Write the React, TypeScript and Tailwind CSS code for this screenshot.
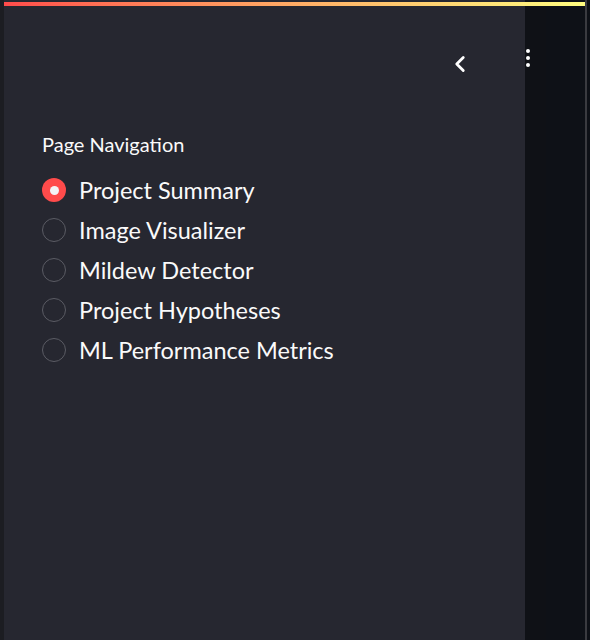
import { ChevronLeft } from "lucide-react";

const pages = [
  "Project Summary",
  "Image Visualizer",
  "Mildew Detector",
  "Project Hypotheses",
  "ML Performance Metrics",
];

export default function App() {
  const selected = 0;

  return (
    <div
      className="relative flex h-[640px] w-[590px] overflow-hidden bg-[#0e1117]"
      style={{ fontFamily: '"Source Sans Pro", Lato, "Noto Sans", sans-serif' }}
    >
      {/* decoration bar, drawn over the page */}
      <div className="absolute left-[4px] top-[2px] z-10 h-[4px] w-[581px] bg-gradient-to-r from-[#ff4b4b] to-[#fffd80]" />

      {/* left window edge */}
      <div className="w-[4px] flex-shrink-0 bg-[#1c1d22]" />

      {/* Sidebar */}
      <aside className="w-[521px] flex-shrink-0 bg-[#262730]">
        <div className="flex justify-end pr-[52px] pt-[51px]">
          <button type="button" className="text-white">
            <ChevronLeft className="h-[26px] w-[26px]" strokeWidth={2.6} />
          </button>
        </div>

        <div className="px-[38px] pt-[57px]">
          <p className="text-[20px] leading-none text-[#fafafa]">Page Navigation</p>
          <div className="mt-[24px] flex flex-col gap-[16px]">
            {pages.map((p, i) => (
              <label key={p} className="flex items-center gap-[13px]">
                {i === selected ? (
                  <span className="flex h-[24px] w-[24px] items-center justify-center rounded-full bg-[#ff4b4b]">
                    <span className="h-[9px] w-[9px] rounded-full bg-[#f4f4f6]" />
                  </span>
                ) : (
                  <span className="h-[24px] w-[24px] rounded-full border-[1.5px] border-[#5b5c64] bg-[#262730]" />
                )}
                <span className="text-[23.5px] leading-[24px] text-[#fafafa]">{p}</span>
              </label>
            ))}
          </div>
        </div>
      </aside>

      {/* Main area strip */}
      <div className="flex flex-1">
        <div className="flex w-[5px] justify-center bg-[#0f1116] pt-[49px]">
          <div className="flex flex-col items-center gap-[3px]">
            <span className="h-[4px] w-[4px] flex-shrink-0 rounded-full bg-white" />
            <span className="h-[4px] w-[4px] flex-shrink-0 rounded-full bg-white" />
            <span className="h-[4px] w-[4px] flex-shrink-0 rounded-full bg-white" />
          </div>
        </div>
        <div className="w-[16px] bg-[#0f1116]" />
        <div className="w-[39px] bg-[#0e1117]" />
        <div className="w-[2px] bg-[#3a3b40]" />
        <div className="flex-1 bg-[#0e1117]" />
      </div>
    </div>
  );
}
